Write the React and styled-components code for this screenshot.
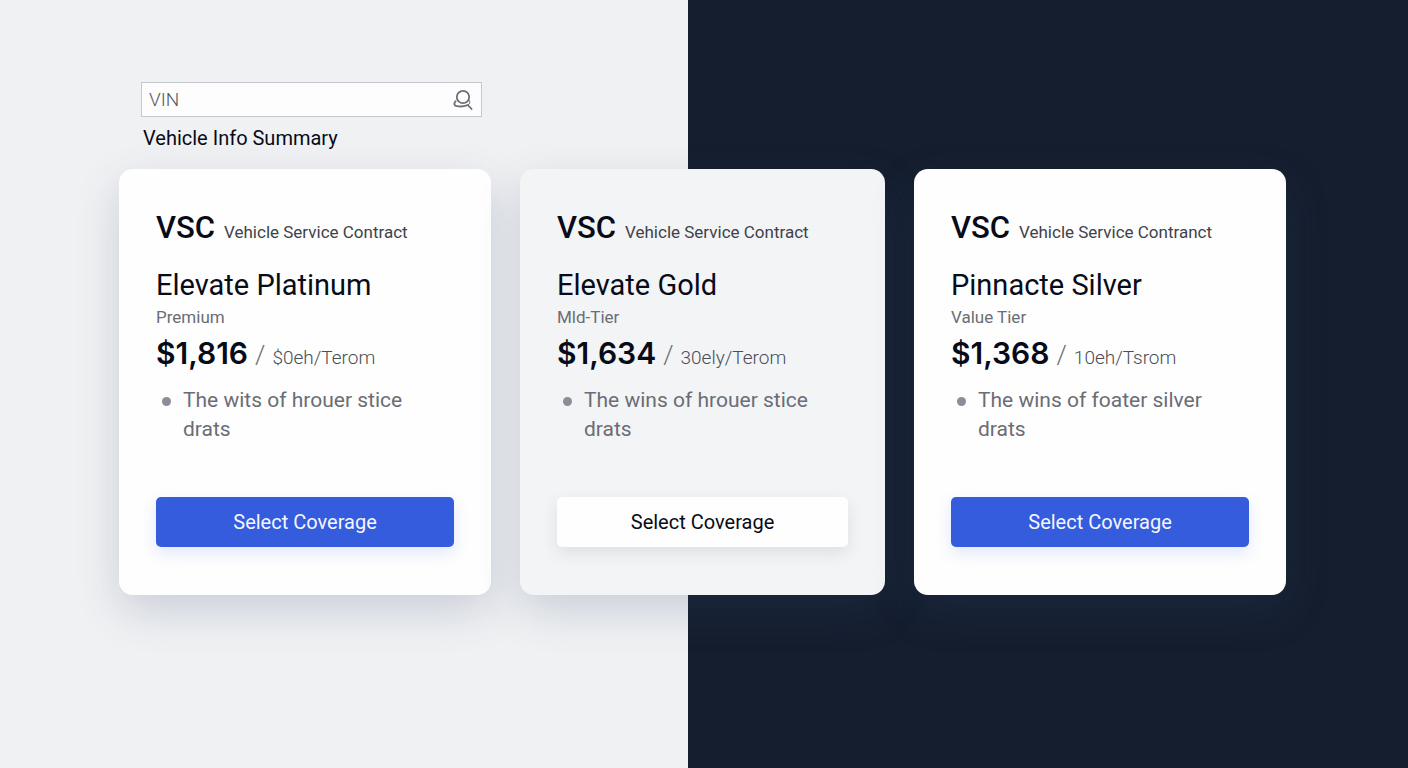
import React from "react";
import styled, { createGlobalStyle, css } from "styled-components";

const GlobalStyle = createGlobalStyle`
  *, *::before, *::after { box-sizing: border-box; }
  body {
    margin: 0;
    font-family: Roboto, Inter, "Liberation Sans", sans-serif;
    color: #080b18;
  }
`;

const Page = styled.main`
  min-height: 100vh;
  padding: 82px 122px 60px 119px;
  background: linear-gradient(to right, #f0f1f3 48.86%, #151e2f 48.86%);
`;

const Lookup = styled.form`
  width: 341px;
  margin-left: 22px;
`;

const SearchBox = styled.label`
  display: flex;
  align-items: center;
  height: 35px;
  padding: 0 8px 0 7px;
  background: #fdfdfe;
  border: 1px solid #c6c8cd;
`;

const SearchInput = styled.input`
  flex: 1;
  min-width: 0;
  padding: 0;
  border: 0;
  outline: 0;
  background: transparent;
  font: 300 19px/24px Roboto, Inter, sans-serif;
  color: #080b18;
  &::placeholder { color: #55585f; opacity: 1; }
`;

const SearchButton = styled.button`
  display: flex;
  padding: 0;
  border: 0;
  background: transparent;
  color: #6c6f76;
  cursor: pointer;
`;

const SummaryTitle = styled.h1`
  margin: 7px 0 0 2px;
  font-size: 20px;
  line-height: 28px;
  font-weight: 400;
`;

const Plans = styled.section`
  display: grid;
  grid-template-columns: 372fr 365fr 372fr;
  gap: 29px;
  margin-top: 17px;
`;

const Card = styled.article`
  display: flex;
  flex-direction: column;
  padding: 41px 37px 48px;
  border-radius: 14px;
  background: ${(p) => (p.$muted ? "#f3f4f5" : "#fefefe")};
  box-shadow: 0 16px 44px rgba(50, 75, 110, 0.2);
`;

const Brand = styled.header`
  display: flex;
  align-items: baseline;
  gap: 9px;
  line-height: 36px;
  white-space: nowrap;
`;

const BrandMark = styled.strong`
  font-size: 31px;
  font-weight: 500;
`;

const BrandName = styled.span`
  font-size: 17px;
  font-weight: 400;
  color: #3f424a;
`;

const PlanName = styled.h2`
  margin: 17px 0 0;
  font-size: 29px;
  line-height: 36px;
  font-weight: 400;
`;

const Tier = styled.p`
  margin: 2px 0 0;
  font-size: 17px;
  line-height: 24px;
  font-weight: 400;
  color: #6a6d75;
`;

const PriceRow = styled.p`
  display: flex;
  align-items: baseline;
  gap: 7px;
  margin: 6px 0 0;
  line-height: 36px;
  white-space: nowrap;
`;

const Price = styled.strong`
  font-family: Inter, "Liberation Sans", sans-serif;
  font-size: 30px;
  font-weight: 600;
`;

const Slash = styled.span`
  font-size: 26px;
  font-weight: 300;
  color: #6c6f76;
`;

const Term = styled.span`
  font-size: 19px;
  font-weight: 300;
  color: #4a4d55;
`;

const Features = styled.ul`
  margin: 10px 0 0;
  padding: 0;
  list-style: none;
`;

const Feature = styled.li`
  display: flex;
  gap: 12px;
  padding-left: 6px;
  font-size: 21px;
  line-height: 29px;
  font-weight: 400;
  color: #6a6d75;
  &::before {
    content: "";
    flex: none;
    width: 9px;
    height: 9px;
    margin-top: 11px;
    border-radius: 50%;
    background: #8b8e96;
  }
`;

const SelectButton = styled.button`
  height: 50px;
  margin-top: 53px;
  border: 0;
  border-radius: 5px;
  font: 400 20px/24px Roboto, Inter, sans-serif;
  cursor: pointer;
  ${(p) =>
    p.$light
      ? css`
          background: #fefefe;
          color: #080b18;
          box-shadow: 0 6px 16px rgba(30, 45, 80, 0.1);
        `
      : css`
          background: #355cdd;
          color: #f4f7ff;
          box-shadow: 0 6px 16px rgba(53, 92, 221, 0.14);
        `}
`;

const plans = [
  { brand: "Vehicle Service Contract", name: "Elevate Platinum", tier: "Premium", price: "$1,816", term: "$0eh/Terom", feature: ["The wits of hrouer stice", "drats"] },
  { brand: "Vehicle Service Contract", name: "Elevate Gold", tier: "Mld-Tier", price: "$1,634", term: "30ely/Terom", feature: ["The wins of hrouer stice", "drats"], muted: true },
  { brand: "Vehicle Service Contranct", name: "Pinnacte Silver", tier: "Value Tier", price: "$1,368", term: "10eh/Tsrom", feature: ["The wins of foater silver", "drats"] },
];

const SearchIcon = () => (
  <svg width="20" height="22" viewBox="0 0 20 22" fill="none" stroke="currentColor" strokeWidth="1.8" strokeLinecap="round" aria-hidden="true">
    <circle cx="10" cy="8" r="6.2" />
    <path d="M2.6 12.2C.6 14.5 1.2 16.8 4 17.2C7.500 17.800 11.500 17.500 14.800 16L18.600 20" />
    <path d="M16.400 11.500C17.400 13.500 17 15 14.800 16" strokeWidth="1" />
  </svg>
);

export default function App() {
  return (
    <>
      <GlobalStyle />
      <Page>
        <Lookup onSubmit={(e) => e.preventDefault()}>
          <SearchBox>
            <SearchInput type="text" placeholder="VIN" aria-label="VIN" />
            <SearchButton type="submit" aria-label="Search">
              <SearchIcon />
            </SearchButton>
          </SearchBox>
          <SummaryTitle>Vehicle Info Summary</SummaryTitle>
        </Lookup>
        <Plans>
          {plans.map((plan) => (
            <Card key={plan.name} $muted={plan.muted}>
              <Brand>
                <BrandMark>VSC</BrandMark>
                <BrandName>{plan.brand}</BrandName>
              </Brand>
              <PlanName>{plan.name}</PlanName>
              <Tier>{plan.tier}</Tier>
              <PriceRow>
                <Price>{plan.price}</Price>
                <Slash>/</Slash>
                <Term>{plan.term}</Term>
              </PriceRow>
              <Features>
                <Feature>
                  <span>
                    {plan.feature[0]}
                    <br />
                    {plan.feature[1]}
                  </span>
                </Feature>
              </Features>
              <SelectButton type="button" $light={plan.muted}>
                Select Coverage
              </SelectButton>
            </Card>
          ))}
        </Plans>
      </Page>
    </>
  );
}
